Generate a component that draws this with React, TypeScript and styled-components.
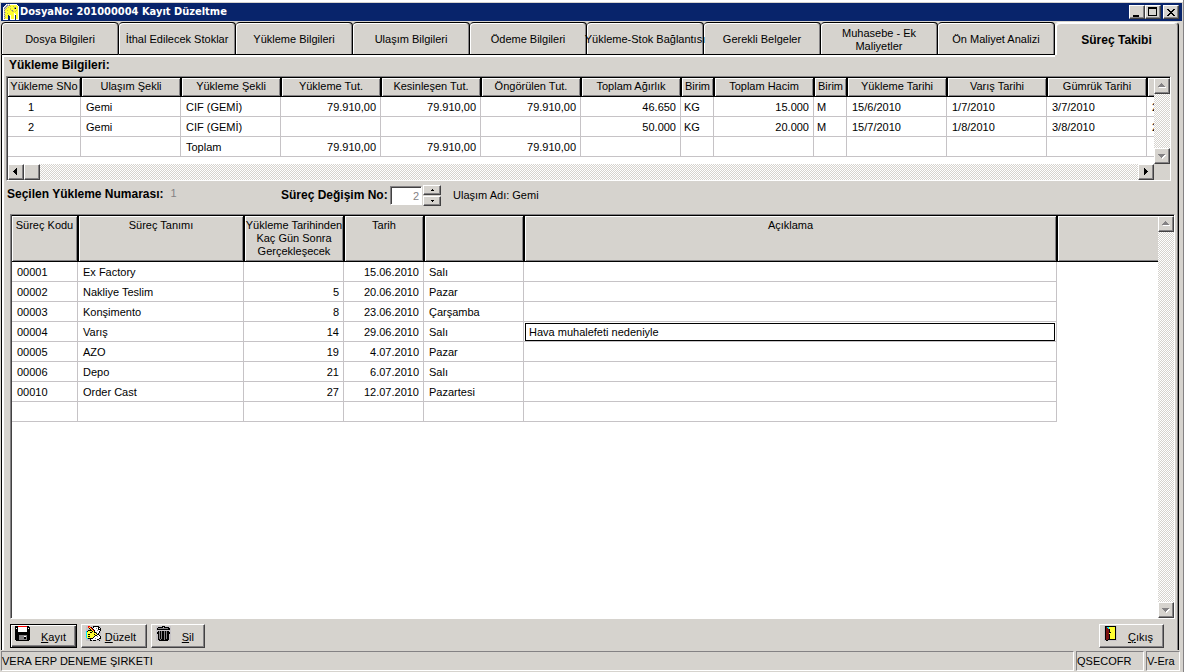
import React from "react";
import styled, { createGlobalStyle, css } from "styled-components";

const FACE = "#d6d3ce";
const SHADOW = "#848284";
const DARK = "#424142";
const GRID = "#c6c3c6";

const Global = createGlobalStyle`
  * { box-sizing: border-box; }
  body {
    margin: 0;
    background: ${FACE};
    color: #000;
    font: 11px/13px "Liberation Sans", Arial, sans-serif;
  }
  button, input { font: inherit; color: inherit; border-radius: 0; }
`;

const raised = css`
  background: ${FACE};
  border: 1px solid;
  border-color: #fff ${DARK} ${DARK} #fff;
  box-shadow: inset -1px -1px ${SHADOW};
`;

const sunken = css`
  border: 1px solid;
  border-color: ${SHADOW} #fff #fff ${SHADOW};
`;

const Window = styled.div`
  display: flex;
  flex-direction: column;
  min-height: 100vh;
  padding: 1px 1px 0 1px;
  border-right: 1px solid ${SHADOW};
  box-shadow: inset 0 2px #fff;
  background: ${FACE};
`;

const TitleBar = styled.header`
  display: flex;
  align-items: center;
  gap: 1px;
  height: 18px;
  margin-top: 2px;
  padding: 0 3px 0 2px;
  background: #08246b;
  color: #fff;
`;

const Title = styled.h1`
  flex: 1;
  margin: 0;
  font-size: 11px;
  line-height: 18px;
  font-weight: bold;
  font-family: "DejaVu Sans Condensed", "DejaVu Sans", sans-serif;
`;

const WindowButtons = styled.div`
  display: flex;
`;

const WindowButton = styled.button<{ $gap?: boolean }>`
  ${raised}
  display: flex;
  width: 16px;
  height: 14px;
  padding: 0;
  margin-left: ${(p) => (p.$gap ? 2 : 0)}px;
  align-items: center;
  justify-content: center;
`;

const Tabs = styled.nav`
  display: flex;
  height: 33px;
  margin: 1px 3px 0 0;
`;

const Tab = styled.button<{ $active?: boolean }>`
  flex: ${(p) => (p.$active ? "0 0 124px" : "1 1 0")};
  min-width: 0;
  padding: 2px 0 0;
  background: ${FACE};
  border: 1px solid #000;
  border-left-width: 0;
  border-radius: 4px 4px 0 0;
  box-shadow: inset -1px 0 ${SHADOW}, inset 1px 1px #fff, 0 2px #fff;
  ${(p) => p.$active && css`
    border-top-color: #fff;
    border-bottom-width: 0;
    box-shadow: inset -1px 0 ${SHADOW}, inset 2px 1px #fff;
    font-size: 12px;
    font-weight: bold;
  `}

  &:first-child { border-left-width: 1px; }
`;

const TabText = styled.span<{ $wrap?: boolean }>`
  position: relative;
  z-index: 1;
  display: flex;
  justify-content: center;
  max-width: ${(p) => (p.$wrap ? "80px" : "none")};
  margin: 0 auto;
  white-space: ${(p) => (p.$wrap ? "normal" : "nowrap")};
`;

const Page = styled.main`
  display: flex;
  flex: 1;
  flex-direction: column;
  margin-right: 3px;
  padding: 2px 1px 1px 3px;
  border-left: 1px solid #000;
  border-right: 1px solid #000;
  box-shadow: inset -1px 0 ${SHADOW}, inset 2px 0 #fff;
`;

const Strong = styled.strong`
  font-size: 12px;
  line-height: 14px;
`;

const SectionTitle = styled.h2`
  margin: 0;
  padding: 1px 0 4px 4px;
  font-size: 12px;
  line-height: 14px;
`;

const GridFrame = styled.section<{ $grow?: boolean }>`
  display: grid;
  grid-template-columns: minmax(0, 1fr) 16px;
  grid-template-rows: minmax(0, 1fr) auto;
  flex: ${(p) => (p.$grow ? "1 1 0" : "0 0 auto")};
  margin: ${(p) => (p.$grow ? "0 2px 0 5px" : "0 6px 0 1px")};
  padding: 1px 0 0 1px;
  border: 1px solid;
  border-color: ${SHADOW} #fff #fff ${SHADOW};
  box-shadow: inset 1px 0 ${DARK}, inset 0 1px #000;
`;

const GridBody = styled.div<{ $height?: number }>`
  height: ${(p) => (p.$height ? `${p.$height}px` : "auto")};
  overflow: hidden;
  background: #fff;
`;

const Table = styled.table<{ $fluid?: boolean }>`
  width: ${(p) => (p.$fluid ? "100%" : "1239px")};
  table-layout: fixed;
  border-collapse: separate;
  border-spacing: 0;
`;

const Th = styled.th<{ $tall?: boolean }>`
  height: ${(p) => (p.$tall ? 46 : 19)}px;
  padding: ${(p) => (p.$tall ? "3px 0 0" : "0 0 2px")};
  overflow: hidden;
  vertical-align: ${(p) => (p.$tall ? "top" : "middle")};
  background: ${FACE};
  border-left: 1px solid #000;
  border-right: 1px solid #000;
  border-bottom: 1px solid #000;
  box-shadow: inset 1px 1px #fff, inset -1px -1px ${SHADOW};
  font-weight: normal;
  text-align: center;
  white-space: ${(p) => (p.$tall ? "normal" : "nowrap")};
  &:first-child { border-left: 0; }
  &:last-child { border-right: 0; box-shadow: inset 1px 1px #fff, inset 0 -1px ${SHADOW}; }
`;

const Td = styled.td<{ $right?: boolean; $pad?: number; $bare?: boolean }>`
  height: 20px;
  padding: 1px 4px 0 ${(p) => p.$pad ?? 5}px;
  text-align: ${(p) => (p.$right ? "right" : "left")};
  border-right: ${(p) => (p.$bare ? "0" : `1px solid ${GRID}`)};
  border-bottom: ${(p) => (p.$bare ? "0" : `1px solid ${GRID}`)};
  white-space: nowrap;
`;

const NoteCell = styled.td`
  height: 20px;
  padding: 1px 1px 0 1px;
  border-right: 1px solid ${GRID};
  border-bottom: 1px solid ${GRID};
`;

const NoteInput = styled.input`
  display: block;
  width: 100%;
  height: 18px;
  padding: 0 3px;
  border: 1px solid #000;
  outline: 0;
`;

const Track = styled.div<{ $horizontal?: boolean }>`
  display: flex;
  flex-direction: ${(p) => (p.$horizontal ? "row" : "column")};
  justify-content: ${(p) => (p.$horizontal ? "flex-start" : "space-between")};
  background: repeating-conic-gradient(${FACE} 0 25%, #fff 0 50%) 0 0 / 2px 2px;
`;

const ScrollButton = styled.button<{ $end?: boolean }>`
  ${raised}
  display: flex;
  flex: 0 0 16px;
  width: 16px;
  height: 16px;
  padding: 0;
  margin-left: ${(p) => (p.$end ? "auto" : 0)};
  align-items: center;
  justify-content: center;
`;

const Corner = styled.div`
  background: ${FACE};
`;

const Controls = styled.div`
  display: flex;
  align-items: center;
  height: 33px;
  padding: 0 0 4px 2px;
`;

const Selected = styled.div`
  display: flex;
  flex: 0 0 274px;
  gap: 7px;
  align-items: center;
  padding-bottom: 4px;
  color: ${SHADOW};
  ${Strong} { color: #000; }
`;

const StepField = styled.div`
  display: flex;
  align-items: center;
`;

const StepLabel = styled.label`
  width: 109px;
  font-size: 12px;
  font-weight: bold;
  white-space: nowrap;
`;

const StepInput = styled.input`
  ${sunken}
  width: 32px;
  height: 19px;
  padding: 0 2px;
  background: #fff;
  box-shadow: inset 1px 1px ${DARK};
  color: ${SHADOW};
  text-align: right;
`;

const StepButtons = styled.div`
  display: flex;
  flex-direction: column;
  gap: 1px;
  margin: 0 12px 0 1px;
`;

const StepButton = styled.button`
  ${raised}
  display: flex;
  width: 18px;
  height: 10px;
  padding: 0;
  align-items: center;
  justify-content: center;
`;

const Actions = styled.div`
  display: flex;
  gap: 4px;
  padding: 5px 13px 1px 5px;
`;

const ActionButton = styled.button<{ $default?: boolean; $width: number; $last?: boolean }>`
  ${raised}
  display: flex;
  width: ${(p) => p.$width}px;
  height: 24px;
  padding: 1px 10px 0 4px;
  margin-left: ${(p) => (p.$last ? "auto" : 0)};
  align-items: flex-start;
  justify-content: space-between;
  ${(p) => p.$default && css`
    border-color: #000;
    box-shadow: inset 1px 1px #fff, inset -1px -1px ${DARK}, inset -2px -2px ${SHADOW};
  `}
`;

const ActionText = styled.span`
  padding-top: 5px;
`;

const StatusBar = styled.footer`
  display: flex;
  gap: 2px;
  height: 22px;
  padding: 1px 2px 1px 0;
`;

const Pane = styled.div<{ $width?: number }>`
  ${sunken}
  flex: ${(p) => (p.$width ? `0 0 ${p.$width}px` : "1 1 0")};
  line-height: 18px;
  white-space: nowrap;
`;

const PALETTE: Record<string, string> = {
  k: "#000", w: "#fff", r: "#ff0000", g: "#c6c3c6", d: "#848284",
  y: "#ffff31", m: "#7b1010", c: "#00e7ff", o: "#c6c34a", n: "#08246b",
};

/* Draws a small bitmap icon, one character per pixel. */
function Bitmap({ rows }: { rows: string[] }) {
  return (
    <svg width={rows[0].length} height={rows.length} shapeRendering="crispEdges" aria-hidden="true">
      {rows.flatMap((row, y) =>
        [...row].map((ch, x) =>
          PALETTE[ch] ? <rect key={`${x}-${y}`} x={x} y={y} width="1" height="1" fill={PALETTE[ch]} /> : null
        )
      )}
    </svg>
  );
}

const ELEPHANT = [
  "...wgwgwwwwwww..",
  "..wgdgdyyyyyyyw.",
  ".wgdgyyoyyoyyyyw",
  "wgdgyoyyyyyodyyw",
  "wdgoyyyoyyydkyyw",
  "wgoyyyyoyyyyyyyw",
  "wdyyoyyyodyyyoyw",
  "wgyyyyyyyooyoyyw",
  "wdoyyyyyyyyyyyyw",
  "wgyyoyyyyyywyyyw",
  "wdyyyyyyyyywwyyw",
  "wgoyynywyyywnyyw",
  "wdyyynnwyyywnyyw",
  "wgoyynnwyyywnyyw",
  "wdyyynnwyyywnyyw",
  "wwwwwnnwwwwwnwww",
];
const FLOPPY = [
  "kkkrrrrrrrrrkk.",
  "kkkwwwwwwwwwkkk",
  "kwkwwwwwwwwwkwk",
  "kkkwwwwwwwwwkkk",
  "kkkwwwwwwwwwkkk",
  "kkkwwwwwwwwwkkk",
  "kkkkkkkkkkkkkkk",
  "kkkkkkkkkkkkkkk",
  "kkkkkkkkkkkkkkk",
  "kkkkddddddddkkk",
  "kkkkdddddwwdkkk",
  "kkkkdddddkkdkkk",
  "kkkkdddddkkdkkk",
  "kkkkddddddddkkk",
  ".kkkkkkkkkkkkk.",
];
const PENCIL = [
  "ggrrgggkkkkkkgg",
  "ggryrkgkwwwwkkg",
  "gggkyrkwwwdwkwk",
  "ggggkyrkwwwwkkk",
  "ggkkkkyrkwwdwwk",
  "ckyyyykykwwwwkg",
  "cyyykkyykkdwwkg",
  "cyyyyyyyyykwkgg",
  "cykkyyyykyykkgg",
  "cyyyyyyyykkwwkg",
  "cykkyyyykwwdwwk",
  "cyyyyyykwwwwwwk",
  "gckkkkkwwdwwwkk",
  "ggggkwwwwwwkkgg",
  "ggggkkgkkkgggkg",
];
const TRASH = [
  "ggggggkkkgggggg",
  "ggkkkkkgkkkkkgg",
  "gkddddddddddkkg",
  "gkkkkkkkkkkkkkg",
  "ggggggggggggggg",
  "ggkdkdkkdkdkkgg",
  "gkkdkdkkdkdkkkg",
  "gkkdkdkkdkdkkkg",
  "ggkdkdkkdkdkkgg",
  "ggkdkdkkdkdkkgg",
  "ggkdkdkkdkdkkgg",
  "ggkdkdkkdkdkkgg",
  "ggkdkdkkdkdkkgg",
  "ggkkdkkkdkkkkgg",
  "gggkkkkkkkkkggg",
];
const DOOR = [
  "gkkkkkkkkkkkg",
  "gkmccyyyyyykg",
  "gkmmcyyyyyykg",
  "gkmmmkyyyyykg",
  "gkmmmkyyyyykg",
  "gkmmmkyyyyykg",
  "gkmmmkkyyyykg",
  "gkmmmyyyyyykg",
  "gkmmmkyyyyykg",
  "gkmmmkyyyyykg",
  "gkmmmkyyyyykg",
  "gkmmmkyyyyykg",
  "gkmmmkyyyyykg",
  "gkmmkkkkkkkkg",
  "ggkkggggggggg",
];

const ARROWS: Record<string, string> = {
  up: "M0 5h7v-1h-1v-1h-1v-1h-1v-1h-1v1h-1v1h-1v1h-1z",
  down: "M0 2h7v1h-1v1h-1v1h-1v1h-1v-1h-1v-1h-1v-1h-1z",
  left: "M5 0v7h-1v-1h-1v-1h-1v-1h-1v-1h1v-1h1v-1h1v-1z",
  right: "M2 0v7h1v-1h1v-1h1v-1h1v-1h-1v-1h-1v-1h-1v-1z",
};

function Arrow({ dir, muted }: { dir: string; muted?: boolean }) {
  return (
    <svg width="8" height="8" shapeRendering="crispEdges" aria-hidden="true">
      {muted && <path d={ARROWS[dir]} fill="#fff" transform="translate(1 1)" />}
      <path d={ARROWS[dir]} fill={muted ? SHADOW : "#000"} />
    </svg>
  );
}

function VerticalScroll() {
  return (
    <Track>
      <ScrollButton aria-label="Yukarı"><Arrow dir="up" muted /></ScrollButton>
      <ScrollButton aria-label="Aşağı"><Arrow dir="down" muted /></ScrollButton>
    </Track>
  );
}

const TABS = [
  { name: "Dosya Bilgileri" },
  { name: "İthal Edilecek Stoklar" },
  { name: "Yükleme Bilgileri" },
  { name: "Ulaşım Bilgileri" },
  { name: "Ödeme Bilgileri" },
  { name: "Yükleme-Stok Bağlantısı" },
  { name: "Gerekli Belgeler" },
  { name: "Muhasebe - Ek Maliyetler", wrap: true },
  { name: "Ön Maliyet Analizi" },
  { name: "Süreç Takibi", active: true },
];

const LOAD_COLUMNS = [
  { name: "Yükleme SNo", width: 73, pad: 20 },
  { name: "Ulaşım Şekli", width: 100 },
  { name: "Yükleme Şekli", width: 100 },
  { name: "Yükleme Tut.", width: 100, right: true },
  { name: "Kesinleşen Tut.", width: 100, right: true },
  { name: "Öngörülen Tut.", width: 100, right: true },
  { name: "Toplam Ağırlık", width: 100, right: true },
  { name: "Birim", width: 33, pad: 3 },
  { name: "Toplam Hacim", width: 100, right: true },
  { name: "Birim", width: 33, pad: 3 },
  { name: "Yükleme Tarihi", width: 100 },
  { name: "Varış Tarihi", width: 100 },
  { name: "Gümrük Tarihi", width: 100 },
  { name: "", width: 100 },
];

const LOADS = [
  ["1", "Gemi", "CIF (GEMİ)", "79.910,00", "79.910,00", "79.910,00", "46.650", "KG", "15.000", "M", "15/6/2010", "1/7/2010", "3/7/2010", "2"],
  ["2", "Gemi", "CIF (GEMİ)", "", "", "", "50.000", "KG", "20.000", "M", "15/7/2010", "1/8/2010", "3/8/2010", "2"],
  ["", "", "Toplam", "79.910,00", "79.910,00", "79.910,00", "", "", "", "", "", "", "", ""],
];

const STEPS = [
  ["00001", "Ex Factory", "", "15.06.2010", "Salı"],
  ["00002", "Nakliye Teslim", "5", "20.06.2010", "Pazar"],
  ["00003", "Konşimento", "8", "23.06.2010", "Çarşamba"],
  ["00004", "Varış", "14", "29.06.2010", "Salı", "Hava muhalefeti nedeniyle"],
  ["00005", "AZO", "19", "4.07.2010", "Pazar"],
  ["00006", "Depo", "21", "6.07.2010", "Salı"],
  ["00010", "Order Cast", "27", "12.07.2010", "Pazartesi"],
  ["", "", "", "", ""],
];

export default function App() {
  return (
    <>
      <Global />
      <Window>
        <TitleBar>
          <Bitmap rows={ELEPHANT} />
          <Title>DosyaNo: 201000004 Kayıt Düzeltme</Title>
          <WindowButtons>
            <WindowButton aria-label="Simge durumuna küçült">
              <svg width="10" height="9"><rect x="1" y="7" width="6" height="2" /></svg>
            </WindowButton>
            <WindowButton aria-label="Ekranı kapla">
              <svg width="10" height="10" shapeRendering="crispEdges"><path d="M0 0h9v9h-9zM1 2v6h7v-6z" fillRule="evenodd" /></svg>
            </WindowButton>
            <WindowButton aria-label="Kapat" $gap>
              <svg width="8" height="7" shapeRendering="crispEdges">
                <path d="M0 0h2v1h1v1h2v-1h1v-1h2v1h-1v1h-1v1h-1v1h1v1h1v1h1v1h-2v-1h-1v-1h-2v1h-1v1h-2v-1h1v-1h1v-1h1v-1h-1v-1h-1v-1h-1z" />
              </svg>
            </WindowButton>
          </WindowButtons>
        </TitleBar>

        <Tabs>
          {TABS.map((tab) => (
            <Tab key={tab.name} $active={tab.active}>
              <TabText $wrap={tab.wrap}>{tab.name}</TabText>
            </Tab>
          ))}
        </Tabs>

        <Page>
          <SectionTitle>Yükleme Bilgileri:</SectionTitle>
          <GridFrame>
            <GridBody $height={86}>
              <Table>
                <colgroup>
                  {LOAD_COLUMNS.map((c, i) => <col key={i} width={c.width} />)}
                </colgroup>
                <thead>
                  <tr>{LOAD_COLUMNS.map((c, i) => <Th key={i}>{c.name}</Th>)}</tr>
                </thead>
                <tbody>
                  {LOADS.map((row, r) => (
                    <tr key={r}>
                      {row.map((value, i) => (
                        <Td key={i} $right={LOAD_COLUMNS[i].right} $pad={LOAD_COLUMNS[i].pad}>{value}</Td>
                      ))}
                    </tr>
                  ))}
                </tbody>
              </Table>
            </GridBody>
            <VerticalScroll />
            <Track $horizontal>
              <ScrollButton aria-label="Sola"><Arrow dir="left" /></ScrollButton>
              <ScrollButton aria-label="Kaydır" />
              <ScrollButton aria-label="Sağa" $end><Arrow dir="right" /></ScrollButton>
            </Track>
            <Corner />
          </GridFrame>

          <Controls>
            <Selected>
              <Strong>Seçilen Yükleme Numarası:</Strong>
              <span>1</span>
            </Selected>
            <StepField>
              <StepLabel htmlFor="step">Süreç Değişim No:</StepLabel>
              <StepInput id="step" defaultValue="2" />
              <StepButtons>
                <StepButton aria-label="Artır">
                  <svg width="3" height="2" shapeRendering="crispEdges"><path d="M1 0h1v1h1v1h-3v-1h1z" /></svg>
                </StepButton>
                <StepButton aria-label="Azalt">
                  <svg width="3" height="2" shapeRendering="crispEdges"><path d="M0 0h3v1h-1v1h-1v-1h-1z" /></svg>
                </StepButton>
              </StepButtons>
            </StepField>
            <span>Ulaşım Adı: Gemi</span>
          </Controls>

          <GridFrame $grow>
            <GridBody>
              <Table $fluid>
                <colgroup>
                  <col width="66" />
                  <col width="166" />
                  <col width="100" />
                  <col width="80" />
                  <col width="100" />
                  <col />
                  <col width="101" />
                </colgroup>
                <thead>
                  <tr>
                    <Th $tall>Süreç Kodu</Th>
                    <Th $tall>Süreç Tanımı</Th>
                    <Th $tall>Yükleme Tarihinden Kaç Gün Sonra Gerçekleşecek</Th>
                    <Th $tall>Tarih</Th>
                    <Th $tall />
                    <Th $tall>Açıklama</Th>
                    <Th $tall />
                  </tr>
                </thead>
                <tbody>
                  {STEPS.map(([code, name, days, date, day, note], r) => (
                    <tr key={r}>
                      <Td>{code}</Td>
                      <Td>{name}</Td>
                      <Td $right>{days}</Td>
                      <Td $right>{date}</Td>
                      <Td>{day}</Td>
                      {note ? (
                        <NoteCell>
                          <NoteInput aria-label="Açıklama" defaultValue={note} />
                        </NoteCell>
                      ) : (
                        <Td />
                      )}
                      <Td $bare />
                    </tr>
                  ))}
                </tbody>
              </Table>
            </GridBody>
            <VerticalScroll />
          </GridFrame>

          <Actions>
            <ActionButton $width={67} $default><Bitmap rows={FLOPPY} /><ActionText><u>K</u>ayıt</ActionText></ActionButton>
            <ActionButton $width={66}><Bitmap rows={PENCIL} /><ActionText><u>D</u>üzelt</ActionText></ActionButton>
            <ActionButton $width={54}><Bitmap rows={TRASH} /><ActionText><u>S</u>il</ActionText></ActionButton>
            <ActionButton $width={65} $last><Bitmap rows={DOOR} /><ActionText><u>Ç</u>ıkış</ActionText></ActionButton>
          </Actions>
        </Page>

        <StatusBar>
          <Pane>VERA ERP DENEME ŞIRKETI</Pane>
          <Pane $width={68}>QSECOFR</Pane>
          <Pane $width={34}>V-Era</Pane>
        </StatusBar>
      </Window>
    </>
  );
}
